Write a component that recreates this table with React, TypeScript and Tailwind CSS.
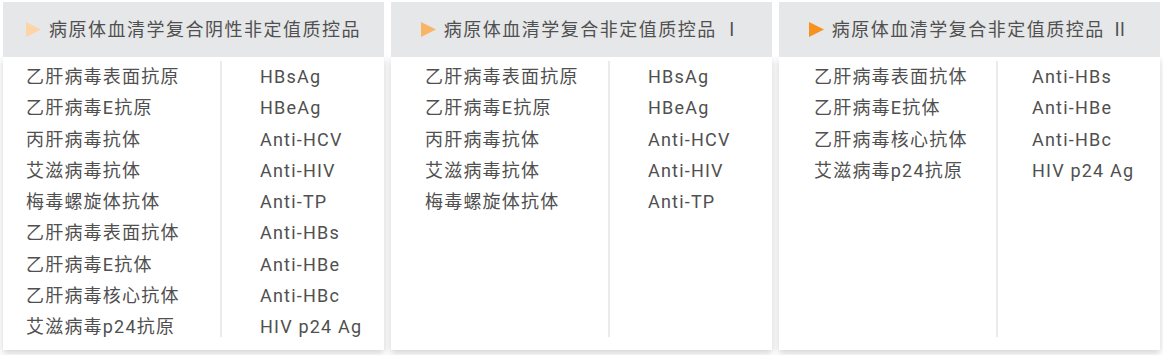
const cjk = '"Roboto", "Noto Sans CJK SC", sans-serif'

type Row = [string, string]

type Panel = {
  title: string
  arrow: string
  padLeft: string
  padRight: string
  rows: Row[]
}

const panels: Panel[] = [
  {
    title: '病原体血清学复合阴性非定值质控品',
    arrow: '#fdd4a8',
    padLeft: 'pl-[23px]',
    padRight: 'pl-[38px]',
    rows: [
      ['乙肝病毒表面抗原', 'HBsAg'],
      ['乙肝病毒E抗原', 'HBeAg'],
      ['丙肝病毒抗体', 'Anti-HCV'],
      ['艾滋病毒抗体', 'Anti-HIV'],
      ['梅毒螺旋体抗体', 'Anti-TP'],
      ['乙肝病毒表面抗体', 'Anti-HBs'],
      ['乙肝病毒E抗体', 'Anti-HBe'],
      ['乙肝病毒核心抗体', 'Anti-HBc'],
      ['艾滋病毒p24抗原', 'HIV p24 Ag'],
    ],
  },
  {
    title: '病原体血清学复合非定值质控品 Ⅰ',
    arrow: '#f9b467',
    padLeft: 'pl-[34px]',
    padRight: 'pl-[38px]',
    rows: [
      ['乙肝病毒表面抗原', 'HBsAg'],
      ['乙肝病毒E抗原', 'HBeAg'],
      ['丙肝病毒抗体', 'Anti-HCV'],
      ['艾滋病毒抗体', 'Anti-HIV'],
      ['梅毒螺旋体抗体', 'Anti-TP'],
    ],
  },
  {
    title: '病原体血清学复合非定值质控品 Ⅱ',
    arrow: '#f7921e',
    padLeft: 'pl-[35px]',
    padRight: 'pl-[34px]',
    rows: [
      ['乙肝病毒表面抗体', 'Anti-HBs'],
      ['乙肝病毒E抗体', 'Anti-HBe'],
      ['乙肝病毒核心抗体', 'Anti-HBc'],
      ['艾滋病毒p24抗原', 'HIV p24 Ag'],
    ],
  },
]

function PanelCard({ panel }: { panel: Panel }) {
  return (
    <div className="flex w-[381px] flex-col">
      <div className="relative z-10 flex h-[55px] items-center justify-center gap-2 bg-[#e6e7e9]">
        <svg width="15" height="15" viewBox="0 0 15 15" className="shrink-0">
          <polygon points="0,0 15,7.5 0,15" fill={panel.arrow} />
        </svg>
        <span className="text-[18px] tracking-[1.5px] text-[#505050]">{panel.title}</span>
      </div>
      <div className="bg-white pt-1 pb-[13px] shadow-[0_3px_7px_rgba(0,0,0,0.18)]">
        <div className="flex h-[276px] text-[18px] leading-[31.25px] tracking-[1.2px] text-[#505050]">
          <ul className={`w-[219px] border-r-2 border-[#ebebeb] ${panel.padLeft}`}>
            {panel.rows.map(([name]) => (
              <li key={name}>{name}</li>
            ))}
          </ul>
          <ul className={`flex-1 ${panel.padRight}`}>
            {panel.rows.map(([, code]) => (
              <li key={code}>{code}</li>
            ))}
          </ul>
        </div>
      </div>
    </div>
  )
}

export default function App() {
  return (
    <div className="h-[355px] w-[1163px] overflow-hidden bg-white" style={{ fontFamily: cjk }}>
      <div className="flex gap-[7px] pt-[2px] pl-[3px]">
        {panels.map((panel) => (
          <PanelCard key={panel.title} panel={panel} />
        ))}
      </div>
    </div>
  )
}
